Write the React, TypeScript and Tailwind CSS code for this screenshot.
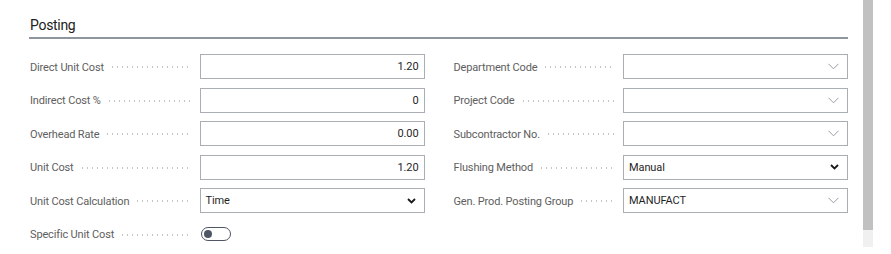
import React from "react";

const Chevron = ({ bold }: { bold?: boolean }) =>
  bold ? (
    <svg width="9" height="6" viewBox="0 0 9 6" className="shrink-0">
      <path d="M1 1 L4.5 4.5 L8 1" fill="none" stroke="#1a1a1a" strokeWidth="1.8" />
    </svg>
  ) : (
    <svg width="11" height="7" viewBox="0 0 11 7" className="shrink-0">
      <path d="M0.5 0.8 L5.5 5.8 L10.5 0.8" fill="none" stroke="#8a8f96" strokeWidth="0.9" />
    </svg>
  );

type Field =
  | { label: string; kind: "num"; value: string }
  | { label: string; kind: "select"; value: string }
  | { label: string; kind: "lookup"; value: string }
  | { label: string; kind: "toggle" };

const left: Field[] = [
  { label: "Direct Unit Cost", kind: "num", value: "1.20" },
  { label: "Indirect Cost %", kind: "num", value: "0" },
  { label: "Overhead Rate", kind: "num", value: "0.00" },
  { label: "Unit Cost", kind: "num", value: "1.20" },
  { label: "Unit Cost Calculation", kind: "select", value: "Time" },
  { label: "Specific Unit Cost", kind: "toggle" },
];

const right: Field[] = [
  { label: "Department Code", kind: "lookup", value: "" },
  { label: "Project Code", kind: "lookup", value: "" },
  { label: "Subcontractor No.", kind: "lookup", value: "" },
  { label: "Flushing Method", kind: "select", value: "Manual" },
  { label: "Gen. Prod. Posting Group", kind: "lookup", value: "MANUFACT" },
];

function Row({ f }: { f: Field }) {
  return (
    <div className="flex items-center h-[25px]">
      <div className="flex items-center flex-1 min-w-0 pr-[9px]">
        <span className="pt-[3px] text-[11px] text-[#5e5e5e] whitespace-nowrap tracking-[-0.15px]">{f.label}</span>
        <div className="flex-1 ml-[6px] mt-[1px] h-[4px] bg-[radial-gradient(circle,#c4c4c4_0.6px,transparent_0.9px)] bg-size-[5px_4px] bg-repeat-x" />
      </div>
      {f.kind === "toggle" ? (
        <div className="w-[225px] h-[25px] flex items-center">
          <div className="ml-[1px] w-[30px] h-[14px] rounded-full border border-[#4f5766] flex items-center px-[2px]">
            <div className="w-[8px] h-[8px] rounded-full bg-[#4f5766]" />
          </div>
        </div>
      ) : (
        <div className="w-[225px] h-[25px] border border-[#a9aeb4] bg-white flex items-center px-[5px] text-[11px] text-[#1f1f1f] tracking-[-0.1px]">
          {f.kind === "num" ? (
            <span className="ml-auto pt-[2px]">{f.value}</span>
          ) : (
            <>
              <span className="flex-1 pt-[2px]">{f.value}</span>
              <span className="mr-[3px] flex items-center">
                <Chevron bold={f.kind === "select"} />
              </span>
            </>
          )}
        </div>
      )}
    </div>
  );
}

export default function App() {
  return (
    <div className="w-[891px] h-[254px] bg-white flex font-['Roboto',sans-serif]">
      <div className="w-[863px] pl-[29px] pr-[15px]">
        <div className="pt-[15px]">
          <div className="pl-[1px] text-[14px] text-[#212121] leading-[20px] tracking-[-0.3px]">Posting</div>
          <div className="mt-[2px] h-[2px] bg-[#8e959e]" />
        </div>
        <div className="mt-[15px] grid grid-cols-2 gap-x-[29px] pl-[1px]">
          <div className="flex flex-col gap-[8.5px]">
            {left.map((f) => (
              <Row key={f.label} f={f} />
            ))}
          </div>
          <div className="flex flex-col gap-[8.5px]">
            {right.map((f) => (
              <Row key={f.label} f={f} />
            ))}
          </div>
        </div>
      </div>
      <div className="w-[10px] flex flex-col">
        <div className="h-[230px] bg-[#c1c1c1]" />
        <div className="h-[17px] bg-[#f0f0f0]" />
      </div>
    </div>
  );
}
